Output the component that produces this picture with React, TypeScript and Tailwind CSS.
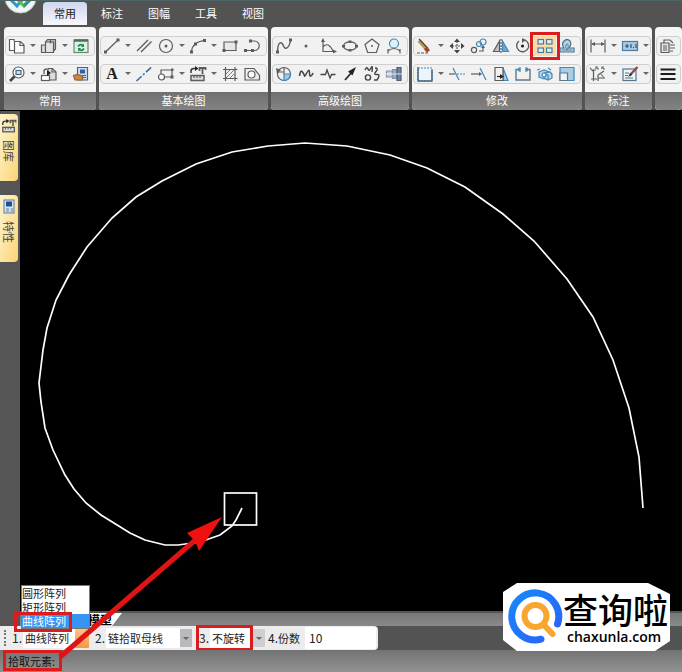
import { useState } from "react"
import type { ReactNode } from "react"

type Tool = { name: string; icon: ReactNode; menu?: boolean; marked?: boolean }
type Group = { title: string; size: string; rows: Tool[][] }

const DARK = "#5c5c5c"
const BLUE = "#4289b8"

const Icon = ({ children }: { children: ReactNode }) => (
    <svg className="overflow-visible" width="18" height="16" viewBox="0 0 18 16" fill="none" stroke={DARK} strokeWidth="1.2" aria-hidden="true">
        {children}
    </svg>
)

// drawings used in more than one place
const partIcon = (
    <>
        <path d="M2 7V5q0-2.500 3-2.500h2" strokeWidth="1.500" stroke="#333" />
        <path d="M6 0l3.500 2.500L6 5z" fill="#222" stroke="none" />
        <path d="M10.500 5V2h6v2M13.500 2v6" strokeWidth="1.800" />
        <rect x="2" y="9.500" width="13" height="5" fill="#ddd" strokeWidth="1.500" />
        <path d="M5 9.500v2.500M8 9.500v2.500M11 9.500v2.500" />
    </>
)

const groups: Group[] = [
    {
        title: "常用",
        size: "w-[92px]",
        rows: [
            [
                { name: "复制", menu: true, icon: <><path d="M6 3V1.500H1.500v11H6" fill="#fff" /><path d="M6.500 3.500h6l3.500 3.500v8H6.500z" fill="#fafafa" /><path d="M12 3.500V7.500h4" /></> },
                { name: "粘贴", menu: true, icon: <><path d="M1.500 7h4v7.500h-4z" fill="#ddd" /><path d="M5.500 4l2-2.500h8V11l-2 2" fill="#bbb" /><path d="M5.500 4h8v10.500h-8z" fill="#e4e4e4" /><path d="M10.500 1.500v4" /></> },
                { name: "刷新", icon: <><rect x="2" y="2" width="14" height="12.500" fill="#e2eee5" stroke="#6d8577" /><path d="M2 2.500h14" strokeWidth="2.500" stroke="#4d6f5e" /><path d="M6 8.500q2-3 5-1M12 10.500q-2 3-5 1" stroke="#179250" strokeWidth="1.800" /><path d="M12 5.500v3.500H9zM6 13.500V10h3z" fill="#179250" stroke="none" /></> },
            ],
            [
                { name: "缩放", menu: true, icon: <><circle cx="10.500" cy="6.500" r="5.500" fill="#fff" /><rect x="8" y="4.500" width="5" height="4" fill="#cfe3f1" stroke="#47657c" /><path d="M6.500 10.500L2 15" strokeWidth="2.600" stroke="#444" /></> },
                { name: "块", menu: true, icon: <><path d="M8 2.500h4.500L16 6v8H8z" fill="#ddd" /><path d="M12 2.500V6h4" /><rect x="1.500" y="9.500" width="8" height="5" fill="#fff" /><path d="M4 8V5q0-2 3-2" strokeWidth="1.300" /><path d="M7 4l4 3-4 3z" fill="#222" stroke="none" /></> },
                { name: "特性匹配", icon: <><path d="M5.500 1.500h10V14h-10z" fill="#cfdff0" stroke="#41658f" /><rect x="8" y="3.500" width="5" height="4" fill="#2d62a4" stroke="none" /><path d="M10 9.500h4M10 11.500h4" stroke="#41658f" /><path d="M1.500 9.500q5-2 9 1v3.500H3z" fill="#c98846" stroke="#9c6228" /></> },
            ],
        ],
    },
    {
        title: "基本绘图",
        size: "w-[169px]",
        rows: [
            [
                { name: "直线", menu: true, icon: <><path d="M2.500 14L15 2" /><path d="M1 12.500h3v3H1zM13.500.5h3v3h-3z" fill={DARK} stroke="none" /></> },
                { name: "平行线", icon: <path d="M2 13L13 2M6 14L16.500 3.500" strokeWidth="1.400" /> },
                { name: "圆", menu: true, icon: <><circle cx="9" cy="8" r="6.500" /><circle cx="9" cy="8" r="1.500" fill={DARK} stroke="none" /></> },
                { name: "圆弧", menu: true, icon: <><path d="M2.500 14Q3 4 15.500 2.500" /><path d="M1 12.500h3v3H1zM14 1h3v3h-3zM5 4.500h3v3H5z" fill={DARK} stroke="none" /></> },
                { name: "矩形", icon: <><path d="M3 4h12v8.500H3z" fill="#e8e8e8" /><path d="M13.500 2.500h3v3h-3zM1.500 11h3v3h-3z" fill={DARK} stroke="none" /></> },
                { name: "多段线", icon: <><path d="M8 3h3.500a4.500 4.500 0 010 9.500H2" /><path d="M6 1.500h3v3H6zM1 11h3v3H1zM8 11h3v3H8z" fill={DARK} stroke="none" /></> },
            ],
            [
                { name: "文字", menu: true, icon: <text x="9" y="13" textAnchor="middle" fontFamily="Liberation Serif, serif" fontWeight="bold" fontSize="16" fill="#1d1d1d" stroke="none">A</text> },
                { name: "中心线", icon: <path d="M1.500 15L16.500 1" stroke="#3f69a0" strokeWidth="1.600" strokeDasharray="7 2 2 2" /> },
                { name: "局部放大", menu: true, icon: <><path d="M4 8V4h11v7H8" /><circle cx="4.500" cy="11" r="3" fill="#fff" /><path d="M14 2.500h2.500v2.500H14zM13.500 9.500h3v3h-3z" fill={DARK} stroke="none" /></> },
                { name: "图库", menu: true, icon: partIcon },
                { name: "剖面线", icon: <><path d="M4.500 1v14M14 1v14M2 3.500h14.500M2 12.500h14.500" /><path d="M5 8l4-4M5 12l8-8M9 12l4-4" strokeWidth=".8" /></> },
                { name: "填充", icon: <><path d="M2 2.500h9l5.500 7v4.500H2z" fill="#eee" /><circle cx="8.500" cy="8.500" r="3.500" fill="#fff" /></> },
            ],
        ],
    },
    {
        title: "高级绘图",
        size: "w-[138px]",
        rows: [
            [
                { name: "样条", icon: <><path d="M2.500 13.500C3 2 7 4 8.500 8S14 11 15.500 2.500" strokeWidth="1.400" /><path d="M1 12.500h3v3H1zM14 .5h3v3h-3z" fill={DARK} stroke="none" /></> },
                { name: "点", icon: <circle cx="9" cy="8" r="1.500" fill={DARK} stroke="none" /> },
                { name: "公式曲线", icon: <><path d="M4 2v11.500h12M4 9q5-6 10 4" /><path d="M2 4l2-4 2 4zM14 11.500l4 2-4 2z" fill={DARK} stroke="none" /></> },
                { name: "椭圆", icon: <><ellipse cx="9" cy="8" rx="6.500" ry="4.200" /><path d="M1 7h3v2.500H1zM14 7h3v2.500h-3zM7.500 2.500h3V5h-3zM7.500 11h3v2.500h-3z" fill={DARK} stroke="none" /></> },
                { name: "正多边形", icon: <><path d="M9 1l7 5.500-2.600 8H4.600L2 6.500z" /><circle cx="9" cy="8" r="1" fill={DARK} stroke="none" /></> },
                { name: "圆弧拟合", icon: <><circle cx="9" cy="5.500" r="4.500" fill="#e3f0f8" stroke={BLUE} /><path d="M3 15.500V11M15 15.500V11M3 13q6-5 12 0" /></> },
            ],
            [
                { name: "局部视图", icon: <><circle cx="9" cy="8" r="6.500" /><path d="M9 8h6.500a6.500 6.500 0 01-6.500 6.500z" fill="#9dcae8" stroke={BLUE} /><path d="M3 6h5M9 8V2" /><path d="M1 2l5 2-4 4z" fill={DARK} stroke="none" /></> },
                { name: "波浪线", icon: <path d="M2.500 10q1-7 3-4t2 4 2.500-3.500 2.500 0 1.500 3.500 2-3" strokeWidth="1.500" stroke="#444" /> },
                { name: "双折线", icon: <path d="M1.500 8.500h5L8 4l3 8 1.500-3.500h4" strokeWidth="1.300" stroke="#444" /> },
                { name: "箭头", icon: <><path d="M4 14l7-8" strokeWidth="1.600" stroke="#222" /><path d="M15 1L7 5.500l4.500 4z" fill="#222" stroke="none" /></> },
                { name: "齿形", icon: <><path d="M2 4q2-4 3-1t3-1 1 4M12 2q4 0 1 3.500t1 3 0 5.500h-3" strokeWidth="1.400" stroke="#444" /><circle cx="5" cy="11.500" r="2.600" strokeWidth="1.400" stroke="#444" /></> },
                { name: "孔轴", icon: <><path d="M1.500 5h6v6h-6z" fill="#c3cedb" stroke="#8493a5" /><path d="M7.500 3.500H12v9H7.500z" fill="#9babc0" stroke="#8493a5" /><path d="M12 1.500h4v13h-4z" fill="#6d83a0" stroke="#46607e" /><path d="M1 8h16" stroke="#fff" strokeWidth=".8" /></> },
            ],
        ],
    },
    {
        title: "修改",
        size: "w-[170px]",
        rows: [
            [
                { name: "删除", menu: true, icon: <><path d="M3 2.500l8 9" stroke="#b49b65" strokeWidth="4" /><path d="M3 1l9 9.500" stroke="#58482c" /><path d="M9.500 10l3 3.500" stroke="#aa3f25" strokeWidth="4" /><path d="M1 15h12" strokeDasharray="3 1" /></> },
                { name: "平移", icon: <><path d="M9 3v10M4 8h10" strokeDasharray="2 1" /><path d="M9 .5l3 3.500H6zM9 15.500l3-3.500H6zM1.500 8L5 5v6zM16.500 8L13 5v6z" fill="#444" stroke="none" /></> },
                { name: "平移复制", icon: <><circle cx="13" cy="4" r="3" stroke={BLUE} /><circle cx="9" cy="6" r="2.500" stroke={BLUE} /><circle cx="4" cy="12" r="2.600" /><path d="M9 13h4V9" /><path d="M11 10l2-3 2 3z" fill={DARK} stroke="none" /></> },
                { name: "镜像", icon: <><path d="M7.500 3v10.500H1.500z" fill="#b8c3cc" /><path d="M10.500 3v10.500h6z" fill="#6fa8cf" stroke={BLUE} /><path d="M9 1v14" strokeDasharray="2 1" /></> },
                { name: "旋转", icon: <><path d="M11 2.200A6 6 0 115 3" strokeWidth="1.400" /><path d="M8 0v5L12 2z" fill={DARK} stroke="none" /><circle cx="8.500" cy="8" r="1.600" fill="#222" stroke="none" /></> },
                { name: "阵列", marked: true, icon: <g stroke="#4c7d99" fill="#dceef6"><rect x="2" y="1.500" width="5.500" height="4.500" /><rect x="10.500" y="1.500" width="5.500" height="4.500" /><rect x="2" y="10" width="5.500" height="4.500" /><rect x="10.500" y="10" width="5.500" height="4.500" /></g> },
                { name: "等距线", icon: <><path d="M2 14v-4h4Q3 6 6 3t6 0q2 3-1 7h5v4z" fill="#b4d1e4" stroke="#4d7490" /><path d="M4 12h5q-2-3-1-5.500 1-1 2 0 1 2.500-1 5.500h5" stroke="#4d7490" strokeWidth=".8" /></> },
            ],
            [
                { name: "裁剪框", menu: true, icon: <><rect x="2" y="2" width="14" height="13" fill="#eef5fa" stroke={BLUE} strokeDasharray="2 1" /><path d="M2 1v14h14V4" stroke="#44657c" strokeWidth="1.400" /></> },
                { name: "裁剪", icon: <><path d="M1 8h6" stroke={DARK} /><path d="M9 8h8" stroke={BLUE} strokeDasharray="2 1" /><path d="M5 2l6 12" stroke={BLUE} /></> },
                { name: "延伸", icon: <><path d="M1 8h9" /><path d="M9 6l3 2-3 2z" fill={DARK} stroke="none" /><path d="M10 2l6 12" stroke={BLUE} /></> },
                { name: "拉伸", icon: <><path d="M11 2l5 12.500h-5z" fill="#9fcbe4" stroke={BLUE} /><path d="M3 1.500h8v13H3z" fill="#f2f2f2" /><path d="M5 10.500h4" stroke="#222" /><path d="M8 8l4 2.500L8 13z" fill="#222" stroke="none" /></> },
                { name: "打断", icon: <><path d="M6 3.500H2V14h14V3.500h-4" stroke="#5f7888" strokeWidth="1.400" /><path d="M6 1v5M12 1v5" stroke={BLUE} /><path d="M4 1.500l3 2-3 2zM14 1.500l-3 2 3 2z" fill={BLUE} stroke="none" /></> },
                { name: "分解", icon: <g stroke={BLUE} fill="#b9d9ea"><path d="M3 6l5-2 5 2v6l-5 1-5-2z" /><path d="M8 7l6-1 2 2v4l-4 2-4-2z" /><path d="M8 7l4 2v5M1 4l3-1M12 2l3 2" fill="none" /><circle cx="8" cy="9" r="2" fill="#eef8ff" /></g> },
                { name: "缩放图形", icon: <><path d="M2 1.500h14v13H2z" fill="#a8cde4" stroke={BLUE} /><path d="M2 7h7.500v7.500H2z" fill="#eef6fa" stroke="#5f7888" /></> },
            ],
        ],
    },
    {
        title: "标注",
        size: "w-[67px]",
        rows: [
            [
                { name: "尺寸标注", menu: true, icon: <><path d="M2 1.500v13M16 1.500v13M3 6h12" /><path d="M2 6l4-2v4zM16 6l-4-2v4z" fill={DARK} stroke="none" /></> },
                { name: "公差", menu: true, icon: <><rect x="1.500" y="3.500" width="15" height="9" fill="#a5cae6" stroke="#527a9e" /><path d="M4 8h4M6 6v4M10 6v4M12 9.500h1M15 6v4" stroke="#2f5477" /></> },
            ],
            [
                { name: "坐标标注", menu: true, icon: <><path d="M2 4h5M4.500 4v11M2 13h6M9 9l6-4M9 9v6M9 12h7" /><path d="M1 2l3 3M7 1h2v2H7zM13 1h2v2h-2z" strokeDasharray="2 1" /><path d="M12 8l3 4" stroke={BLUE} /></> },
                { name: "标注编辑", menu: true, icon: <><rect x="2" y="3" width="13" height="11.500" fill="#edf4f8" stroke="#55758d" /><path d="M4 7h4M4 9.500h3M4 12h8" stroke="#55758d" /><path d="M16.500 1L9 9" stroke="#8d4d39" strokeWidth="2.400" /><path d="M9.500 7L7 11l4-2z" fill="#222" stroke="none" /></> },
            ],
        ],
    },
    {
        title: "",
        size: "flex-1 min-w-0 overflow-hidden",
        rows: [
            [{ name: "图层", icon: <><path d="M2 5h8v9.500H2z" fill="#e4e4e4" /><path d="M5 5V2h6l3 3M4 8h4M4 10h4M4 12h4M11 7h5M11 10h5M11 13h3" /></> }],
            [{ name: "线宽", icon: <path d="M1.500 3.500h15M1.500 8h15M1.500 13h15" stroke="#1c1c1c" strokeWidth="2.200" /> }],
        ],
    },
]

const spiral =
    "242,508 236,520 232,526 220,535 200,542 178,545 165,545 145,540 130,533 101,515 86,503 74,489 65,475 53,450 45,428 41,402 39,383 43,350 47,328 56,300 69,275 87,247 112,218 136,197 162,181 196,164 232,152 268,146 305,143 347,146 390,155 427,168 465,187 503,214 534,241 567,279 593,317 613,360 629,408 639,457 643,508"

const ribbonTabs = ["常用", "标注", "图幅", "工具", "视图"]
const arrayModes = ["圆形阵列", "矩形阵列", "曲线阵列"]

const Caret = () => <span className="border-x-3 border-t-3 border-x-transparent border-t-[#666]" />

const ToolRow = ({ tools }: { tools: Tool[] }) => (
    <div className="flex h-5 rounded-sm border border-[#cfcfcf] bg-[#f1f1f1]">
        {tools.map((tool) => (
            <div key={tool.name} className="flex items-center">
                <button
                    type="button"
                    aria-label={tool.name}
                    className={
                        tool.marked
                            ? "flex h-5 w-[22px] items-center justify-center bg-[#fbdca6] outline-3 outline-offset-1 outline-[#dc1c1c]"
                            : "flex h-5 w-[22px] items-center justify-center"
                    }
                >
                    <Icon>{tool.icon}</Icon>
                </button>
                {tool.menu && (
                    <button type="button" aria-label={tool.name + "菜单"} className="flex h-5 w-[10px] items-center justify-center">
                        <Caret />
                    </button>
                )}
            </div>
        ))}
    </div>
)

const RibbonGroup = ({ group }: { group: Group }) => (
    <section className={group.size + " shrink-0 rounded-sm bg-[#f5f5f5]"}>
        <div className="flex h-[65px] flex-col justify-center gap-2 px-px">
            {group.rows.map((tools, i) => (
                <ToolRow key={i} tools={tools} />
            ))}
        </div>
        <h2 className="h-[18px] rounded-b-sm bg-linear-to-b from-[#707070] to-[#838383] text-center text-[11px] leading-4 text-white">
            {group.title}
        </h2>
    </section>
)

const SideTab = ({ label, children }: { label: string; children: ReactNode }) => (
    <button
        type="button"
        className="flex h-[67px] w-[18px] flex-col items-center gap-1.5 rounded-r-sm bg-linear-to-br from-[#fff3cf] to-[#fbd573] pt-1 text-[11px] leading-4 text-[#444]"
    >
        {children}
        <span className="[text-orientation:sideways] [writing-mode:vertical-rl]">{label}</span>
    </button>
)

const Watermark = () => (
    <div className="absolute right-3 bottom-[21px] flex h-[68px] w-[167px] bg-white [clip-path:polygon(14px_0,145px_0,167px_11px,167px_58px,152px_100%,14px_100%,0_57px,0_9px)]">
        <svg className="shrink-0" width="60" height="68" viewBox="0 0 60 68" fill="none" aria-hidden="true">
            <defs>
                <linearGradient id="ring" x1="0" y1="0" x2="1" y2="1">
                    <stop offset="0" stopColor="#1688fb" />
                    <stop offset="1" stopColor="#2b62f5" />
                </linearGradient>
            </defs>
            <path d="M54.500 41A23.500 23.500 0 1 0 38 56.200" stroke="url(#ring)" strokeWidth="7" strokeLinecap="round" />
            <circle cx="32.500" cy="33" r="11" stroke="#f9a62f" strokeWidth="6" />
            <path d="M41 42l8.500 9" stroke="#f9a62f" strokeWidth="6" strokeLinecap="round" />
        </svg>
        <div className="pt-1.5 text-black">
            <p className="text-[35px] leading-10 font-medium whitespace-nowrap">查询啦</p>
            <p className="pl-1 font-['Open_Sans',sans-serif] text-[14px] leading-4 font-semibold">chaxunla.com</p>
        </div>
    </div>
)

const App = () => {
    const [activeTab, setActiveTab] = useState("常用")
    const [mode, setMode] = useState("曲线阵列")
    const [copies, setCopies] = useState("10")

    return (
        <div className="relative flex min-h-screen flex-col overflow-hidden bg-[#535353] font-['Noto_Sans_CJK_SC',sans-serif] text-[11px]">
            <header className="bg-[#535353]">
                <nav className="relative flex h-[27px] items-end gap-[3px] overflow-hidden border-t border-[#4c6566] pb-0.5 pl-[43px]">
                    <svg className="absolute -top-5 left-1" width="33" height="33" viewBox="0 0 33 33" fill="none" aria-hidden="true">
                        <circle cx="16.500" cy="16.500" r="15.500" fill="#f2f5f5" stroke="#bfc8c8" />
                        <path d="M5 17l8 8 5-6" stroke="#2b9bd3" strokeWidth="3" />
                        <path d="M12 17l8 8 3-4" stroke="#64b845" strokeWidth="3" />
                        <path d="M20 25l8-8" stroke="#27919c" strokeWidth="3" />
                    </svg>
                    {ribbonTabs.map((tab) => (
                        <button
                            key={tab}
                            type="button"
                            onClick={() => setActiveTab(tab)}
                            className={
                                tab === activeTab
                                    ? "h-[23px] w-11 rounded-t-sm bg-linear-to-b from-[#cfd6ee] to-[#f8f8fb] text-[#222]"
                                    : "h-[23px] w-11 text-white"
                            }
                        >
                            {tab}
                        </button>
                    ))}
                </nav>
                <div className="flex gap-[3px] border-b border-black pl-1">
                    {groups.map((group) => (
                        <RibbonGroup key={group.title} group={group} />
                    ))}
                </div>
            </header>

            <div className="flex flex-1">
                <aside className="flex w-5 flex-col gap-3.5 bg-[#555] pt-[3px]">
                    <SideTab label="图库">
                        <svg width="16" height="16" viewBox="0 0 18 16" fill="none" stroke={DARK} strokeWidth="1.200" aria-hidden="true">
                            {partIcon}
                        </svg>
                    </SideTab>
                    <SideTab label="特性">
                        <svg width="12" height="16" viewBox="0 0 12 16" fill="none" stroke="#5f7898" aria-hidden="true">
                            <rect x="1" y="1" width="10" height="13" fill="#dbe6f2" />
                            <rect x="3" y="2.500" width="6" height="5" fill="#1f4f9c" stroke="none" />
                            <path d="M3 10h3M7.500 10H10M3 12h3M7.500 12H10" />
                        </svg>
                    </SideTab>
                </aside>
                <div className="flex flex-1 flex-col">
                    <main className="flex-1 bg-black">
                        <svg className="block w-full" viewBox="20 111 662 500" fill="none" stroke="#fff" role="img" aria-label="螺旋线">
                            <polyline points={spiral} strokeWidth="1.700" />
                            <rect x="224.500" y="493" width="32" height="32" strokeWidth="1.700" />
                        </svg>
                    </main>
                    <div className="flex h-[15px] border-t-2 border-[#555] bg-linear-to-b from-[#777] to-[#8a8a8a] pl-[62px]">
                        <button
                            type="button"
                            className="h-[13px] w-10 bg-white pl-1.5 text-left text-[12px] leading-3 font-bold text-black [clip-path:polygon(0_0,100%_0,75%_100%,0_100%)]"
                        >
                            模型
                        </button>
                    </div>
                </div>
            </div>

            <div className="flex h-6">
                <form className="flex w-[378px] items-center rounded-r-sm bg-[#ececec] text-[#222]" onSubmit={(e) => e.preventDefault()}>
                    <span className="ml-1 h-4 border-l-2 border-dotted border-[#777]" />
                    <div className="relative ml-1.5 flex items-center">
                        <label htmlFor="mode" className="w-[11px] text-[12px]">1.</label>
                        <select id="mode" value={mode} onChange={(e) => setMode(e.target.value)} className="h-5 w-[52px] appearance-none bg-white pl-0.5">
                            {arrayModes.map((item) => (
                                <option key={item}>{item}</option>
                            ))}
                        </select>
                        <span className="h-5 w-3.5 bg-linear-to-b from-[#fcc58c] to-[#f59a3f]" />
                        {/* opened list of the first box */}
                        <ul role="listbox" aria-label="阵列方式" className="absolute bottom-[19px] left-[9px] w-[69px] border border-[#777] bg-white">
                            {arrayModes.map((item) => (
                                <li
                                    key={item}
                                    role="option"
                                    aria-selected={item === mode}
                                    onClick={() => setMode(item)}
                                    className={item === mode ? "h-3.5 bg-[#3595f5] leading-3.5 text-white" : "h-3.5 leading-3.5"}
                                >
                                    {item}
                                </li>
                            ))}
                        </ul>
                        <span className="absolute bottom-4 left-0.5 h-5 w-[58px] border-3 border-[#dc1c1c]" />
                    </div>
                    <div className="ml-1.5 flex items-center">
                        <label htmlFor="pick" className="w-[11px] text-[12px]">2.</label>
                        <select id="pick" className="h-5 w-[74px] appearance-none bg-white pl-0.5">
                            <option>链拾取母线</option>
                        </select>
                        <span className="flex h-[18px] w-3 items-center justify-center bg-[#b9b9bd]">
                            <Caret />
                        </span>
                    </div>
                    <div className="ml-1 flex items-center">
                        <div className="flex h-[26px] items-center border-3 border-[#dc1c1c] bg-[#ececec]">
                            <label htmlFor="turn" className="w-[11px] text-[12px]">3.</label>
                            <select id="turn" className="h-5 w-10 appearance-none bg-white pl-0.5">
                                <option>不旋转</option>
                            </select>
                        </div>
                        <span className="flex h-[18px] w-3 items-center justify-center bg-[#cfcfd2]">
                            <Caret />
                        </span>
                    </div>
                    <label htmlFor="copies" className="ml-[3px] w-[37px] text-[12px] whitespace-nowrap">
                        4.<span className="text-[11px]">份数</span>
                    </label>
                    <input
                        id="copies"
                        value={copies}
                        onChange={(e) => setCopies(e.target.value)}
                        className="mr-0.5 h-[22px] min-w-0 flex-1 bg-white pb-0.5 pl-1 text-[12px]"
                    />
                </form>
            </div>

            <footer className="flex h-[22px] bg-linear-to-b from-[#737373] to-[#929292] pl-[3px]">
                <p className="h-[21px] w-[59px] border-3 border-[#dc1c1c] pl-0.5 leading-4 text-[#111]">拾取元素:</p>
            </footer>

            <svg className="pointer-events-none absolute bottom-0 left-0" width="240" height="172" viewBox="0 500 240 172" aria-hidden="true">
                <path d="M60 657L200 536" stroke="#e01414" strokeWidth="5" />
                <path d="M222 517L187 533l8 8 4 10z" fill="#f01010" />
            </svg>
            <Watermark />
        </div>
    )
}

export default App
